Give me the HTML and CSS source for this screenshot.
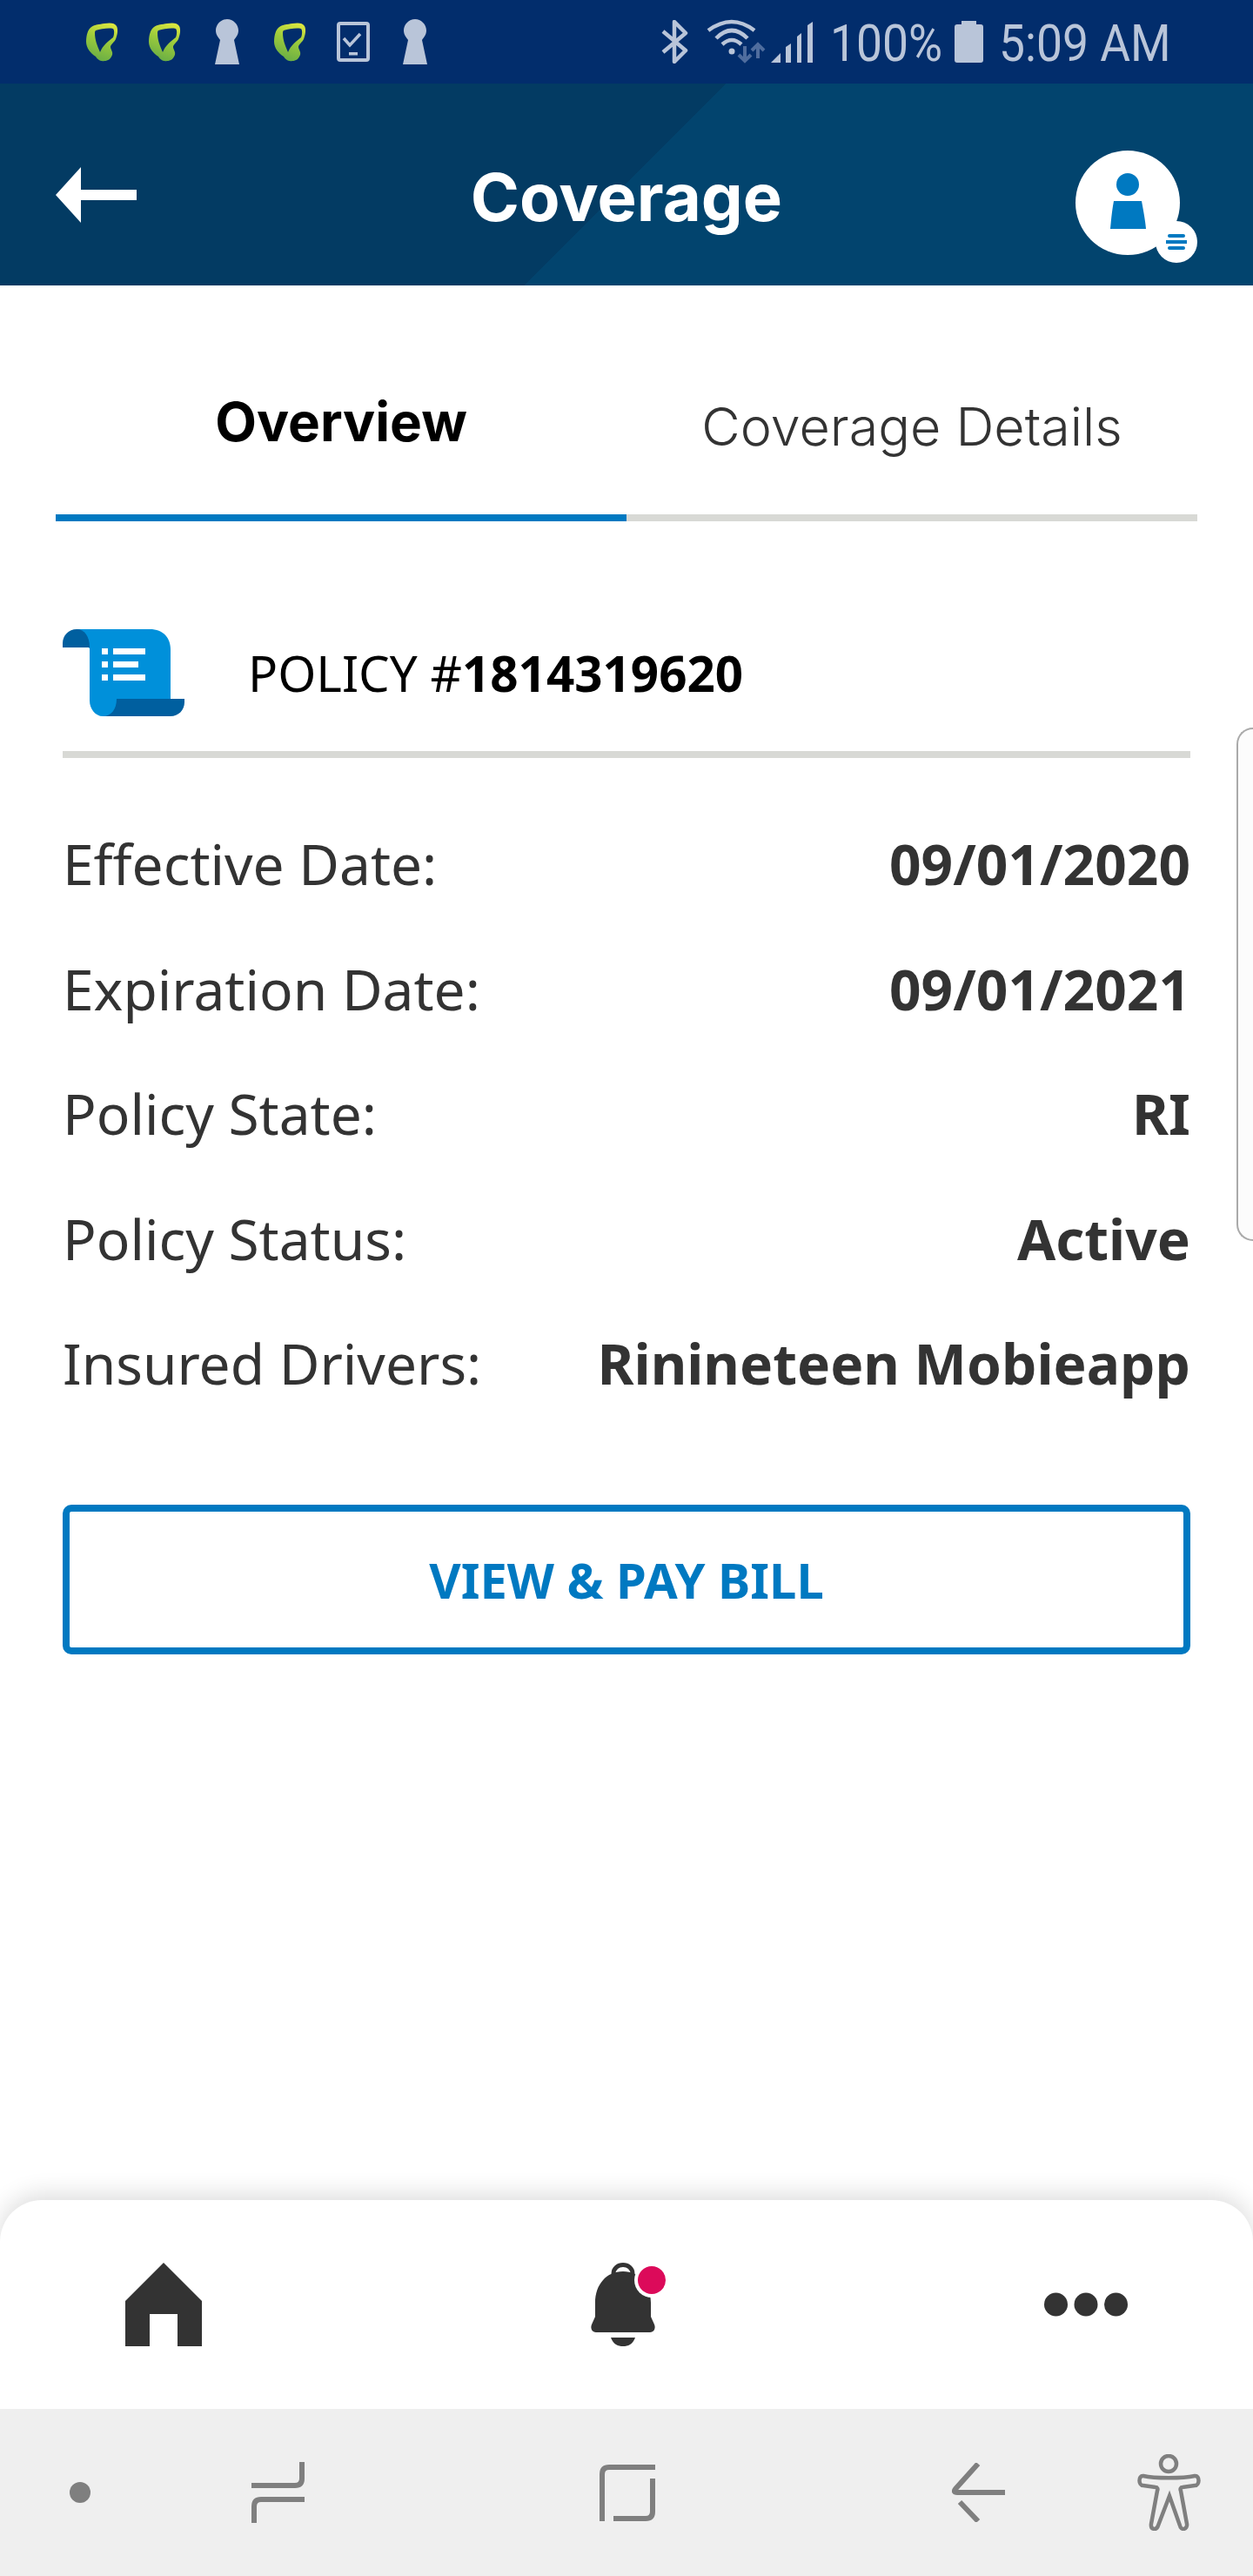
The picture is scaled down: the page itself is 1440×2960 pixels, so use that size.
FILE: index.html
```html
<!DOCTYPE html>
<html lang="en">
<head>
  <meta charset="UTF-8" />
  <title>Coverage</title>
  <link rel="stylesheet" href="styles.css">
</head>
<body>

  <svg class="defs" width="0" height="0">
    <defs>
      <linearGradient id="leaf-fill" x1="0.7" y1="0" x2="0.4" y2="1">
        <stop offset="0" stop-color="#dbe63f" />
        <stop offset="0.45" stop-color="#9ccb3c" />
        <stop offset="1" stop-color="#68ad45" />
      </linearGradient>
      <symbol id="leaf" viewBox="0 0 40 56">
        <path fill="url(#leaf-fill)" fill-rule="evenodd" d="M22 7C28 6 34 6 36 10C38 14 37 20 35 25C33 29 29 31 29 34C29 37 32 39 31 43C29 48 26 50 22 50C17 51 14 48 12 45C6 41 1 35 1 28C1 20 3 14 7 11C11 8 16 8 22 7ZM12 15C18 13 27 12 32 13C34 15 33 21 32 23C27 27 20 32 17 40C14 33 11 26 11 18C11 17 11 16 12 15Z" />
      </symbol>
      <symbol id="keyhole" viewBox="0 0 40 56">
        <path fill="#b9c5d9" d="M19 2C26 2 32 8 32 15C32 20 29 23 27 26L33 54H5L11 26C9 23 6 20 6 15C6 8 12 2 19 2Z" />
      </symbol>
    </defs>
  </svg>

  <div class="status-bar">
    <div class="status-left">
      <svg class="status-icon"><use href="#leaf" /></svg>
      <svg class="status-icon"><use href="#leaf" /></svg>
      <svg class="status-icon"><use href="#keyhole" /></svg>
      <svg class="status-icon"><use href="#leaf" /></svg>
      <svg class="status-icon" viewBox="0 0 40 56">
        <rect x="3" y="7" width="34" height="42" rx="2" fill="none" stroke="#b9c5d9" stroke-width="4" />
        <path d="M9 24L16 32L28 19" fill="none" stroke="#b9c5d9" stroke-width="3.5" />
        <rect x="15" y="40" width="10" height="3.5" fill="#b9c5d9" />
      </svg>
      <svg class="status-icon"><use href="#keyhole" /></svg>
    </div>
    <div class="status-right">
      <svg width="31" height="50" viewBox="0 0 31 50">
        <path d="M2 13L28 35L15 48V2L28 15L2 37" fill="none" stroke="#b9c5d9" stroke-width="4.5" stroke-linejoin="round" />
      </svg>
      <svg class="status-signal" width="125" height="56" viewBox="0 0 125 56">
        <g fill="none" stroke="#b9c5d9" stroke-width="4.5">
          <path d="M3 15Q30 -5 56 15" />
          <path d="M12 24Q30 6 48 24" />
          <path d="M19 31Q30 21 41 31" />
        </g>
        <circle cx="30" cy="39" r="3.5" fill="#b9c5d9" />
        <g fill="none" stroke="#4f6d9e" stroke-width="4">
          <path d="M45 33V50M38 43L45 50L52 43" />
          <path d="M60 47V31M53 38L60 31L67 38" />
        </g>
        <g fill="#b9c5d9">
          <polygon points="75,52 86,41 86,52" />
          <polygon points="92,52 92,34 98,30 98,52" />
          <polygon points="105,52 105,22 110,18 110,52" />
          <polygon points="117,52 117,9 123,5 123,52" />
        </g>
      </svg>
      <span class="status-text status-battery">100%</span>
      <svg width="33" height="48" viewBox="0 0 33 48">
        <path fill="#b9c5d9" d="M8 0H25V4H30C32 4 33 5 33 7V45C33 47 32 48 30 48H3C1 48 0 47 0 45V7C0 5 1 4 3 4H8Z" />
      </svg>
      <span class="status-text status-time">5:09 AM</span>
    </div>
  </div>

  <header class="app-header">
    <svg class="back-arrow" width="93" height="64" viewBox="0 0 93 64">
      <path fill="#fff" d="M29 0V26H93V38H29V64L0 32Z" />
    </svg>
    <h1 class="page-title">Coverage</h1>
    <svg class="avatar" width="140" height="160" viewBox="0 0 140 160">
      <circle cx="60" cy="89" r="60" fill="#fff" />
      <circle cx="60" cy="68" r="13" fill="#0079c1" />
      <path fill="#0079c1" d="M44 87H76C78 98 80 108 81 119H40C41 108 42 98 44 87Z" />
      <circle cx="116" cy="134" r="24" fill="#fff" />
      <g fill="#0079c1">
        <rect x="106" y="125" width="20" height="4" rx="2" />
        <rect x="104" y="132" width="24" height="4" />
        <rect x="106" y="139" width="20" height="4" rx="2" />
      </g>
    </svg>
  </header>

  <main class="content">
    <nav class="tabs">
      <div class="tab tab-active">Overview</div>
      <div class="tab">Coverage Details</div>
    </nav>

    <section class="policy">
      <div class="policy-head">
        <svg width="140" height="100" viewBox="0 0 140 100">
          <path fill="#0090da" d="M16 0H100C116 0 124 10 124 24V80H62V100H46C38 100 31 92 31 82V22L16 10Z" />
          <path fill="#005f9f" d="M16 0C25 0 31 8 31 21H0V16C0 7 7 0 16 0Z" />
          <path fill="#005f9f" d="M62 80H140V84C140 93 133 100 124 100H46C56 100 62 92 62 80Z" />
          <g fill="#fff">
            <rect x="45" y="22" width="7" height="7" />
            <rect x="58" y="22" width="37" height="7" />
            <rect x="45" y="37" width="7" height="7" />
            <rect x="58" y="37" width="29" height="7" />
            <rect x="45" y="52" width="7" height="7" />
            <rect x="58" y="52" width="37" height="7" />
          </g>
        </svg>
        <div class="policy-number">POLICY #<b>1814319620</b></div>
      </div>

      <div class="details">
        <div class="detail-row"><span>Effective Date:</span><b>09/01/2020</b></div>
        <div class="detail-row"><span>Expiration Date:</span><b>09/01/2021</b></div>
        <div class="detail-row"><span>Policy State:</span><b>RI</b></div>
        <div class="detail-row"><span>Policy Status:</span><b>Active</b></div>
        <div class="detail-row"><span>Insured Drivers:</span><b>Rinineteen Mobieapp</b></div>
      </div>

      <button type="button" class="pay-button">VIEW &amp; PAY BILL</button>
    </section>

    <div class="edge-handle"></div>
  </main>

  <nav class="bottom-nav">
    <svg width="88" height="96" viewBox="0 0 88 96">
      <path fill="#333" d="M44 0L88 44V96H60V59H28V96H0V44Z" />
    </svg>
    <svg width="120" height="100" viewBox="0 0 120 100">
      <path fill="#333" d="M60 12C41 12 28 27 28 48V64L24 73C22 78 25 82 29 82H91C95 82 98 78 96 73L92 64V48C92 27 79 12 60 12Z" />
      <path d="M49 15C49 1 71 1 71 15" fill="none" stroke="#333" stroke-width="5" />
      <path fill="#333" d="M46 88H74C71 96 66 98 60 98C54 98 49 96 46 88Z" />
      <circle cx="93" cy="22" r="20" fill="#fff" />
      <circle cx="93" cy="22" r="16" fill="#dc0a5a" />
    </svg>
    <svg width="96" height="28" viewBox="0 0 96 28">
      <circle cx="13.5" cy="14" r="13.5" fill="#333" />
      <circle cx="48" cy="14" r="13.5" fill="#333" />
      <circle cx="82.5" cy="14" r="13.5" fill="#333" />
    </svg>
  </nav>

  <div class="system-nav">
    <svg class="sys-dot" width="24" height="24" viewBox="0 0 24 24">
      <circle cx="12" cy="12" r="12" fill="#7f7f7f" />
    </svg>
    <svg class="sys-recents" width="61" height="70" viewBox="0 0 61 70">
      <path d="M58 0V19Q58 27 50 27H0M61 43H11Q3 43 3 51V70" />
    </svg>
    <svg class="sys-square" width="64" height="65" viewBox="0 0 64 65">
      <path d="M3 65V11Q3 3 11 3H64M61 16V54Q61 62 53 62H16" />
    </svg>
    <svg class="sys-back" width="61" height="68" viewBox="0 0 61 68">
      <path d="M30 1L4 30Q1 34 6 34H61M9 45L30 67" />
    </svg>
    <svg class="sys-access" width="73" height="88" viewBox="0 0 73 88">
      <circle cx="36" cy="11" r="9" />
      <path d="M7 25C20 28 52 28 66 25C72 24 72 36 66 36L52 38C50 38 49 40 50 42L57 80C58 87 50 88 49 82L37 48L24 82C22 88 15 87 16 80L23 42C24 40 23 38 21 38L7 36C1 36 1 24 7 25Z" />
    </svg>
  </div>

</body>
</html>
```

FILE: styles.css
```css
* {
  box-sizing: border-box;
}
body {
  margin: 0;
  width: 1440px;
  height: 2960px;
  display: flex;
  flex-direction: column;
  background-color: #fff;
  font-family: "Noto Sans", sans-serif;
  color: #333;
  overflow: hidden;
}
svg {
  display: block;
  flex-shrink: 0;
}
.defs {
  position: absolute;
}

/* status bar */
.status-bar {
  height: 96px;
  flex-shrink: 0;
  display: flex;
  align-items: center;
  justify-content: space-between;
  padding: 0 100px 0 98px;
  background-color: #022d6c;
}
.status-left {
  display: flex;
  gap: 32px;
}
.status-icon {
  width: 40px;
  height: 56px;
}
.status-right {
  display: flex;
  align-items: center;
  gap: 18px;
}
.status-signal {
  margin-left: 2px;
}
.status-text {
  display: block;
  margin-top: 3px;
  font-family: Roboto, sans-serif;
  font-size: 60px;
  line-height: 60px;
  color: #b9c5d9;
  white-space: nowrap;
  transform: scaleX(0.89);
  transform-origin: left center;
}
.status-battery {
  width: 125px;
}
.status-time {
  width: 192px;
}

/* header */
.app-header {
  height: 232px;
  flex-shrink: 0;
  display: grid;
  grid-template-columns: 1fr auto 1fr;
  align-items: center;
  padding: 24px 64px 0;
  background: linear-gradient(135deg, #033b63 590px, #02446e 590px);
}
.page-title {
  margin: 4px 0 0;
  font-family: Inter, sans-serif;
  font-size: 76px;
  font-weight: 700;
  line-height: 90px;
  color: #fff;
}
.avatar {
  justify-self: end;
}

/* tabs */
.content {
  flex: 1;
  position: relative;
}
.tabs {
  display: flex;
  margin: 0 64px;
  height: 271px;
}
.tab {
  flex: 1;
  display: flex;
  justify-content: center;
  align-items: center;
  padding-top: 60px;
  border-bottom: 8px solid #d8d9d5;
  font-family: Inter, sans-serif;
  font-size: 61px;
  font-weight: 300;
}
.tab-active {
  padding-top: 50px;
  border-bottom-color: #0079c1;
  font-size: 62px;
  font-weight: 700;
  color: #000;
}

/* policy */
.policy {
  padding: 124px 72px 0;
}
.policy-head {
  display: flex;
  align-items: center;
  gap: 73px;
  padding-bottom: 40px;
  border-bottom: 8px solid #d8d9d5;
}
.policy-number {
  font-size: 56.5px;
  color: #000;
}
.details {
  padding-top: 50px;
}
.detail-row {
  height: 143.5px;
  display: flex;
  align-items: center;
  justify-content: space-between;
  font-size: 64px;
}
.pay-button {
  display: block;
  width: 100%;
  height: 172px;
  margin-top: 90px;
  padding: 0;
  background-color: #fff;
  border: 8px solid #0079c1;
  border-radius: 10px;
  font-family: "Noto Sans", sans-serif;
  font-size: 56px;
  font-weight: 700;
  color: #0079c1;
}
.edge-handle {
  position: absolute;
  top: 508px;
  right: 0;
  width: 19px;
  height: 590px;
  background-color: #fcfcfc;
  border: 2px solid #aaa;
  border-right: none;
  border-radius: 20px 0 0 20px;
}

/* bottom nav */
.bottom-nav {
  height: 240px;
  flex-shrink: 0;
  display: flex;
  align-items: center;
  justify-content: space-between;
  padding: 0 144px;
  background-color: #fff;
  border-radius: 48px 48px 0 0;
  box-shadow: 0 -6px 28px rgba(0, 0, 0, 0.14);
  position: relative;
}
.system-nav {
  height: 192px;
  flex-shrink: 0;
  display: flex;
  align-items: center;
  padding-left: 80px;
  background-color: #efefef;
  position: relative;
}
.system-nav path,
.system-nav .sys-access circle {
  fill: none;
  stroke: #7f7f7f;
  stroke-width: 6;
}
.system-nav .sys-access path,
.system-nav .sys-access circle {
  stroke-width: 4.5;
}
.sys-recents {
  margin-left: 185px;
}
.sys-square {
  margin-left: 339px;
}
.sys-back {
  margin-left: 341px;
}
.sys-access {
  margin-left: 152px;
}
```
